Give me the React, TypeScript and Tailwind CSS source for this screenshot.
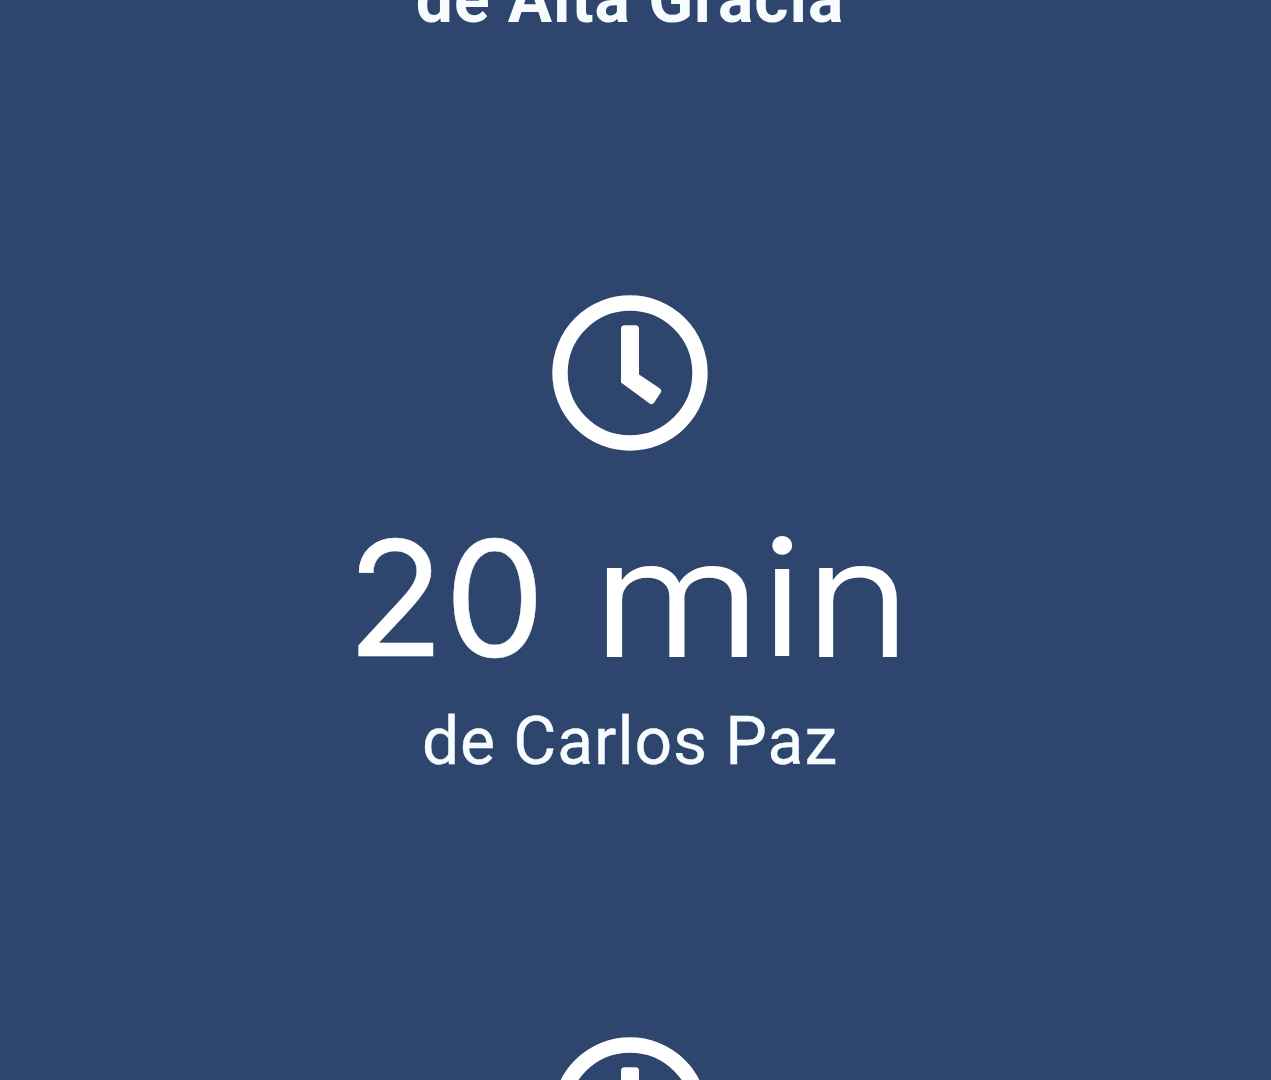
function ClockIcon() {
  return (
    <svg viewBox="0 0 156 156" className="h-[156px] w-[156px] shrink-0" fill="none">
      <circle cx="78" cy="78" r="70" stroke="currentColor" strokeWidth="15.4" />
      <path
        d="M72.5 30.2h11q3.500 0 3.500 3.500V79.500L107.600 93.200q2.800 2 1 4.600L102.200 107.500q-1.900 2.800-4.600 1L69 87.500V33.700q0-3.500 3.500-3.500z"
        fill="currentColor"
      />
    </svg>
  );
}

export default function App() {
  return (
    <main className="flex h-[1080px] w-full flex-col items-center overflow-hidden bg-[#2e466e] pr-[11px] font-['Roboto',sans-serif] text-white">
      <section className="flex h-[295px] shrink-0 flex-col items-center">
        {/* previous item, scrolled mostly out of view */}
        <p className="-mt-[40px] h-[80px] text-[66px] leading-[80px] font-bold tracking-[0.9px] whitespace-nowrap text-[#f7fcff]">
          de Alta Gracia
        </p>
      </section>

      <section className="flex h-[742px] shrink-0 flex-col items-center">
        <ClockIcon />
        <h2 className="mt-[67px] flex h-[160px] gap-[62px] pr-[8px] font-['Inter',sans-serif] text-[160px] leading-[160px] font-normal whitespace-nowrap">
          <span className="[-webkit-text-stroke:0.5px_white]">20</span>
          {/* wide, geometric m and n */}
          <span>
            <span className="mr-[16px] inline-block scale-x-[1.22] font-light [-webkit-text-stroke:1.8px_white]">m</span>
            <span>i</span>
            <span className="ml-[9.5px] inline-block scale-x-[1.12] font-light [-webkit-text-stroke:1.8px_white]">n</span>
          </span>
        </h2>
        <p className="mt-[24px] h-[80px] text-[66px] leading-[80px] tracking-[0.95px] whitespace-nowrap text-[#f7fcff] [-webkit-text-stroke:0.4px_#f7fcff]">
          de Carlos Paz
        </p>
      </section>

      <section className="flex shrink-0 flex-col items-center">
        <ClockIcon />
      </section>
    </main>
  );
}
